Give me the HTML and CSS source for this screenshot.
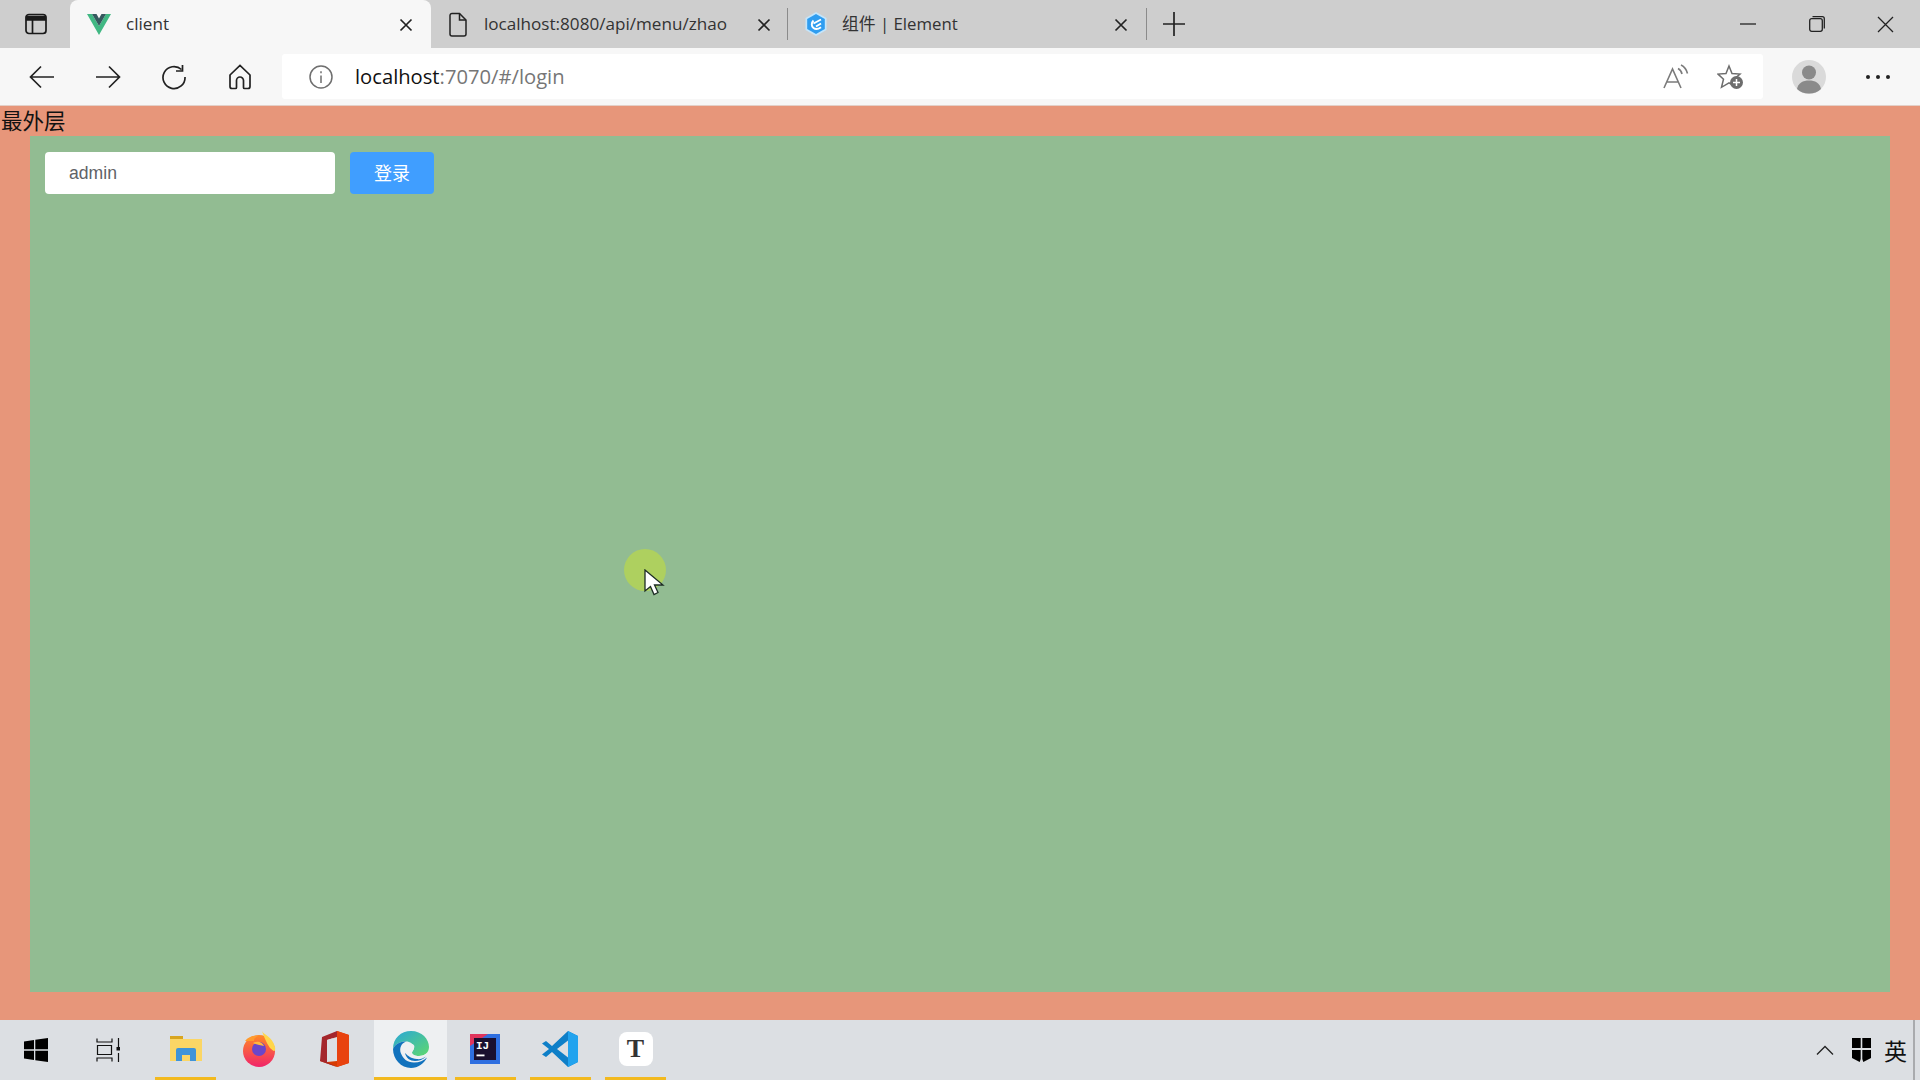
FILE: index.html
```html
<!DOCTYPE html>
<html lang="zh-CN">
<head>
<meta charset="utf-8">
<title>client</title>
<link rel="stylesheet" href="styles.css">
</head>
<body>
<div class="window">
  <header class="tabstrip">
    <div class="sidebtn">
      <svg width="24" height="24" viewBox="0 0 24 24" fill="none" stroke="#1a1a1a" stroke-width="1.700"><rect x="2" y="2.500" width="20" height="19" rx="3"/><path d="M2.500 4.500h19v3.500h-19z" fill="#1a1a1a" stroke-width="1.400"/><path d="M8.500 8v13"/></svg>
    </div>
    <div class="tab tab-active">
      <svg class="favicon" width="24" height="22" viewBox="0 0 24 22"><path d="M0 1h5l7 12 7-12h5L12 22z" fill="#41b883"/><path d="M5 1h4.500L12 5.500 14.500 1H19l-7 12z" fill="#35595e"/></svg>
      <span class="tabtitle">client</span>
      <svg class="tabclose" width="14" height="14" viewBox="0 0 14 14" stroke="#222" stroke-width="1.700"><path d="M1.500 1.500l11 11M12.500 1.500l-11 11"/></svg>
    </div>
    <div class="tab tab-doc">
      <svg class="favicon" width="20" height="25" viewBox="0 0 20 25" fill="none" stroke="#222" stroke-width="1.500"><path d="M2 3.500A2 2 0 0 1 4 1.500h7.500l6.500 6.500v14a2 2 0 0 1-2 2H4a2 2 0 0 1-2-2z"/><path d="M11.500 1.500V8H18"/></svg>
      <span class="tabtitle">localhost:8080/api/menu/zhao</span>
      <svg class="tabclose" width="14" height="14" viewBox="0 0 14 14" stroke="#222" stroke-width="1.700"><path d="M1.500 1.500l11 11M12.500 1.500l-11 11"/></svg>
    </div>
    <div class="tab tab-el">
      <svg class="favicon" width="22" height="24" viewBox="0 0 22 24"><path d="M11 0l10.500 6v12L11 24 .5 18V6z" fill="#c4e5fb"/><path d="M11 2l8.800 5v10L11 22l-8.800-5V7z" fill="#2f9df0"/><path d="M16 7.500L8.500 11.500M16 11.500l-5 3M8.500 8.500c-2.300 2.200-2.300 5.800 0 7.500 2 1.500 5 1 7.500-.8" fill="none" stroke="#fff" stroke-width="1.900"/></svg>
      <span class="tabtitle">组件 | Element</span>
      <svg class="tabclose" width="14" height="14" viewBox="0 0 14 14" stroke="#222" stroke-width="1.700"><path d="M1.500 1.500l11 11M12.500 1.500l-11 11"/></svg>
    </div>
    <div class="newtab">
      <svg width="22" height="26" viewBox="0 0 22 26" stroke="#222" stroke-width="1.700"><path d="M0 13h22M11 1v24"/></svg>
    </div>
    <div class="winctrls">
      <div class="winbtn"><svg width="16" height="4" viewBox="0 0 16 4" stroke="#222" stroke-width="1.300"><path d="M0 2h16"/></svg></div>
      <div class="winbtn"><svg width="16" height="16" viewBox="0 0 16 16" fill="none" stroke="#222" stroke-width="1.300"><rect x=".7" y="2.700" width="12.600" height="12.600" rx="2"/><path d="M3.500.7h9.800a2 2 0 0 1 2 2v9.800"/></svg></div>
      <div class="winbtn"><svg width="17" height="17" viewBox="0 0 17 17" stroke="#222" stroke-width="1.300"><path d="M1 1l15 15M16 1L1 16"/></svg></div>
    </div>
  </header>

  <nav class="toolbar">
    <div class="toolbtn"><svg width="26" height="24" viewBox="0 0 26 24" fill="none" stroke="#222" stroke-width="1.700"><path d="M25 12H2M12 1.500L1.500 12 12 22.500"/></svg></div>
    <div class="toolbtn"><svg width="26" height="24" viewBox="0 0 26 24" fill="none" stroke="#222" stroke-width="1.700"><path d="M1 12h23M14 1.500L24.500 12 14 22.500"/></svg></div>
    <div class="toolbtn"><svg width="26" height="26" viewBox="0 0 26 26" fill="none" stroke="#222" stroke-width="1.700"><path d="M20.500 5.500A11 11 0 1 0 24 13"/><path d="M21.500 1v6h-6.500"/></svg></div>
    <div class="toolbtn"><svg width="24" height="26" viewBox="0 0 24 26" fill="none" stroke="#222" stroke-width="1.700"><path d="M2 11L12 1.500 22 11v11.500a2 2 0 0 1-2 2h-3.500a1 1 0 0 1-1-1V16.500a3.500 3.500 0 0 0-7 0v7a1 1 0 0 1-1 1H4a2 2 0 0 1-2-2z"/></svg></div>
    <div class="addressbar">
      <svg class="infoicon" width="24" height="24" viewBox="0 0 24 24" fill="none" stroke="#6f6f6f" stroke-width="1.500"><circle cx="12" cy="12" r="11"/><path d="M12 10.500v7.500M12 6.300v2"/></svg>
      <span class="url"><span class="urlhost">localhost</span>:7070/#/login</span>
      <div class="addressactions">
        <svg width="28" height="26" viewBox="0 0 28 26" fill="none" stroke="#7b7b7b" stroke-width="1.600"><path d="M1 24L9.500 5 18 24M4 18h11"/><path d="M15 4.500c2 1 3.500 3 4 5.500M18 1c3 1.500 5.500 4.500 6.500 8.500"/></svg>
        <svg width="28" height="26" viewBox="0 0 28 26"><path d="M12 2l3 7.500 8 .6-6 5.200 1.500 7.500-6.500-4-7.500 4.500L6.500 15.300 1 10.100l8-.6z" fill="none" stroke="#6d6d6d" stroke-width="1.500"/><circle cx="19.500" cy="18.500" r="6.500" fill="#6d6d6d"/><path d="M19.500 15v7M16 18.500h7" stroke="#fff" stroke-width="1.500"/></svg>
      </div>
    </div>
    <div class="avatar"><svg width="34" height="34" viewBox="0 0 34 34"><circle cx="17" cy="17" r="17" fill="#dadada"/><circle cx="17" cy="12.500" r="7" fill="#8a8a8a"/><path d="M5 29c1-6 6-8.500 12-8.500s11 2.500 12 8.500c-3 3-7.500 4.500-12 4.500S8 32 5 29z" fill="#8a8a8a"/></svg></div>
    <div class="more"><i></i><i></i><i></i></div>
  </nav>

  <main class="outer">
    <div class="outerlabel">最外层</div>
    <section class="inner">
      <form class="loginform">
        <input class="nameinput" type="text" value="admin">
        <button class="loginbtn" type="button">登录</button>
      </form>
    </section>
    <div class="pointer">
      <svg width="22" height="28" viewBox="0 0 22 28"><path d="M1 1v21l5.500-4.500 3.500 8 4-2-3.500-7.500H19z" fill="#fff" stroke="#1c2c24" stroke-width="1.300"/></svg>
    </div>
  </main>

  <footer class="taskbar">
    <div class="sysbtn">
      <svg width="24" height="24" viewBox="0 0 24 24" fill="#000"><path d="M0 3.400l10-1.400v9.300H0zM11.300 1.800L24 0v11.300H11.300zM0 12.700h10V22L0 20.600zM11.300 12.700H24V24l-12.700-1.800z"/></svg>
    </div>
    <div class="sysbtn">
      <svg width="24" height="24" viewBox="0 0 24 24" fill="none" stroke="#111" stroke-width="1.200"><path d="M1 .5v3.500h15V.5M1.500 7.500h14v9h-14zM1 23.500V20h15v3.500M22.500 0v9M22.500 15v9"/><rect x="20.500" y="9" width="3.500" height="3.500" fill="#111" stroke="none"/></svg>
    </div>
    <div class="taskitem running">
      <svg width="34" height="28" viewBox="0 0 34 28"><path d="M1 1h13v3H1z" fill="#d8a520"/><path d="M1 4h32v22H1z" fill="#fbd665"/><path d="M7 26V15a2 2 0 0 1 2-2h16a2 2 0 0 1 2 2v11h-6v-6h-8v6z" fill="#3f94d8"/></svg>
    </div>
    <div class="taskitem nudge">
      <svg width="36" height="36" viewBox="0 0 36 36"><circle cx="18" cy="20" r="16" fill="url(#ff)"/><path d="M21 0c2 4 10 5 13 16 1 6-2 4-5 1-2-3-5-8-8-17z" fill="#ffd64a"/><path d="M4 10c3-4 8-6 13-5-3 1-4 3-4 5z" fill="#ff9a2e"/><circle cx="18" cy="18" r="7" fill="#6b46c9"/><path d="M12 12c5-3 10 0 11 3-3-1-8-1-11-3z" fill="#ffb83d"/><defs><linearGradient id="ff" x1="0" y1="0" x2="0" y2="1"><stop offset="0" stop-color="#ff8a26"/><stop offset="1" stop-color="#f0246a"/></linearGradient></defs></svg>
    </div>
    <div class="taskitem nudge">
      <svg width="30" height="36" viewBox="0 0 30 36"><path d="M18 0l12 4v28l-12 4L1 30z" fill="#d83b01"/><path d="M18 0L3 6 1 30l17 6-10-5V9l10-3z" fill="#a4262c"/><path d="M8 9l10-3v24L8 31z" fill="#dcdfe3"/><path d="M18 0l12 4v28l-12 4z" fill="#e8420f"/></svg>
    </div>
    <div class="taskitem active">
      <svg width="38" height="38" viewBox="0 0 38 38"><defs><linearGradient id="eg" x1="0" y1="0" x2="1" y2="1"><stop offset="0" stop-color="#2aa7d8"/><stop offset="1" stop-color="#5fd86e"/></linearGradient></defs><path d="M1 19C1 8 9 1 19 1c11 0 18 8 18 16 0 6-5 9-10 9-4 0-7-1.500-7-3.500 0-1 2-2 2-4.500 0-4-4-6.500-8-6.500C8 11.500 3 14 1 19z" fill="url(#eg)"/><path d="M1 19c2-5 7-7.500 13-7.500-5 2-7 7-5 12 2 5 6 9 13 9 5 0 10-2 13-5-3 6-9 10.500-16 10.500C9 38 1 29 1 19z" fill="#1272bd"/><path d="M12 21c0-5 4-7.500 8-7 2 .5 3 2 2 4.500-.5 1.500-2 2.500-2 4 0 2 3 3.500 7 3.500 3 0 6-1 8-3-2 5-7 8-13 8-6 0-10-5-10-10.500z" fill="#eef0f2"/><path d="M13 23c1 5 5 8 10 8 4 0 8-1.500 11-4.500-3 2-6 3-9 2.500-6-.5-9-3-12-6z" fill="#1272bd"/></svg>
    </div>
    <div class="taskitem running shifted">
      <svg width="30" height="30" viewBox="0 0 30 30"><rect width="30" height="30" fill="#2f6fe0"/><path d="M0 0h18L0 12z" fill="#e0345c"/><rect x="4" y="4" width="22" height="22" fill="#1a0f2e"/><text x="6" y="15" class="ijtext">IJ</text><rect x="6.500" y="20.500" width="8" height="1.800" fill="#fff"/></svg>
    </div>
    <div class="taskitem running shifted">
      <svg width="36" height="36" viewBox="0 0 36 36"><path d="M26 0l10 5v26l-10 5L10 21l-6 5-4-2.500L7 18 0 12.500 4 10l6 5z" fill="#0e7fc8"/><path d="M26 9.500L15 18l11 8.500z" fill="#dcdfe3"/><path d="M26 0l10 5v26l-10 5V26.500 9.500z" fill="#22a3ee"/></svg>
    </div>
    <div class="taskitem running">
      <div class="typora">T</div>
    </div>
    <div class="tray">
      <svg width="18" height="10" viewBox="0 0 18 10" fill="none" stroke="#222" stroke-width="1.300"><path d="M1 9.500L9 1.500l8 8"/></svg>
      <svg class="imeicon" width="19" height="24" viewBox="0 0 19 24" fill="#000"><path d="M0 0h8.700v10H0zM10.300 0H19v10h-8.700zM0 12h8.700v9l-1 3L0 20zM10.300 12H19v8l-7.700 4-1-3z"/></svg>
      <span class="imetext">英</span>
    </div>
  </footer>
</div>
</body>
</html>
```
FILE: styles.css
```css
* { box-sizing: border-box; }
html, body { margin: 0; height: 100%; overflow: hidden; }
body { font-family: "Open Sans", "Noto Sans CJK SC", sans-serif; }
.window { display: flex; flex-direction: column; width: 1920px; height: 1080px; }

.tabstrip { display: flex; height: 48px; background: #cecece; flex: none; }
.sidebtn { width: 70px; display: flex; align-items: center; justify-content: center; padding-left: 2px; }
.tab { display: flex; align-items: center; height: 48px; position: relative; }
.tab-active { width: 361px; background: #f7f7f7; border-radius: 8px 8px 0 0; padding-left: 17px; }
.tab-doc { width: 357px; padding-left: 17px; border-right: 1.500px solid #8b8b8b; height: 32px; margin-top: 8px; }
.tab-el { width: 359px; padding-left: 17px; border-right: 1.500px solid #8b8b8b; height: 32px; margin-top: 8px; }
.tabtitle { font-size: 17.100px; line-height: 22px; margin-top: -1px; color: #333; white-space: nowrap; }
.tab-active .tabtitle { margin-left: 15px; }
.tab-doc .tabtitle { margin-left: 16px; }
.tab-el .tabtitle { margin-left: 15px; font-size: 16.800px; }
.tabclose { position: absolute; right: 18px; top: 50%; margin-top: -6px; }
.tab-doc .tabclose { right: 16px; }
.newtab { width: 54px; display: flex; align-items: center; justify-content: center; }
.winctrls { margin-left: auto; display: flex; }
.winbtn { width: 69px; display: flex; align-items: center; justify-content: center; }

.toolbar { display: flex; align-items: center; height: 58px; flex: none; background: #f7f7f7; padding-left: 9px; border-bottom: 1px solid #e4d0c8; }
.toolbtn { width: 66px; display: flex; align-items: center; justify-content: center; }
.addressbar { display: flex; align-items: center; width: 1481px; height: 45px; margin-left: 9px; background: #fff; padding-left: 27px; border-radius: 3px; }
.infoicon { flex: none; }
.url { margin-left: 22px; font-size: 20.200px; line-height: 24px; margin-top: -2px; color: #767676; white-space: nowrap; }
.urlhost { color: #111; }
.addressactions { margin-left: auto; display: flex; gap: 26px; padding-right: 18px; }
.avatar { margin-left: 29px; display: flex; }
.more { margin-left: 40px; display: flex; gap: 6px; }
.more i { width: 4px; height: 4px; border-radius: 50%; background: #222; }

.outer { flex: 1; position: relative; display: flex; flex-direction: column; background: #e7967a; }
.outerlabel { height: 30px; font-family: "Noto Sans CJK SC", sans-serif; font-size: 21.500px; line-height: 28px; color: #111; padding-left: 1px; }
.inner { margin: 0 30px; height: 856px; background: #92bc92; padding: 16px 15px; }
.loginform { display: flex; gap: 15px; }
.nameinput { width: 290px; height: 42px; border: 0; border-radius: 4px; background: #fff; padding: 0 24px; font-family: "Liberation Sans", sans-serif; font-size: 17.600px; color: #606266; outline: 0; }
.loginbtn { width: 84px; height: 42px; border: 0; border-radius: 4px; background: #409eff; color: #fff; font-family: "Noto Sans CJK SC", sans-serif; font-size: 18px; line-height: 38px; padding: 0 0 3px; }
.pointer { position: absolute; left: 624px; top: 443px; width: 42px; height: 42px; border-radius: 50%; background: #aed05f; }
.pointer svg { position: absolute; left: 20px; top: 20px; }

.taskbar { display: flex; align-items: stretch; height: 60px; flex: none; background: #dcdfe3; }
.sysbtn { width: 72px; display: flex; align-items: center; justify-content: center; }
.sysbtn + .sysbtn { width: 71px; margin-right: 12px; }
.taskitem { width: 61px; margin-right: 14px; display: flex; align-items: center; justify-content: center; border-bottom: 3px solid transparent; }
.taskitem.nudge { padding-right: 4px; }
.taskitem.shifted { padding-right: 2px; }
.taskitem.running { border-bottom-color: #f2b91f; }
.taskitem.active { width: 73px; margin-left: -6px; margin-right: 8px; background: #eef0f2; border-bottom-color: #f2b91f; }
.ijtext { font-family: "Liberation Mono", monospace; font-size: 11px; font-weight: 700; fill: #fff; }
.typora { width: 34px; height: 34px; border-radius: 8px; background: #fff; display: flex; align-items: center; justify-content: center; font-family: "Liberation Serif", serif; font-weight: 700; font-size: 26px; color: #333; }
.tray { margin-left: auto; display: flex; align-items: center; padding-right: 6px; border-right: 2px solid #a9abae; margin-right: 5px; }
.imeicon { margin-left: 18px; }
.imetext { margin-left: 13px; font-family: "Noto Sans CJK SC", sans-serif; font-size: 23px; color: #111; }
```
